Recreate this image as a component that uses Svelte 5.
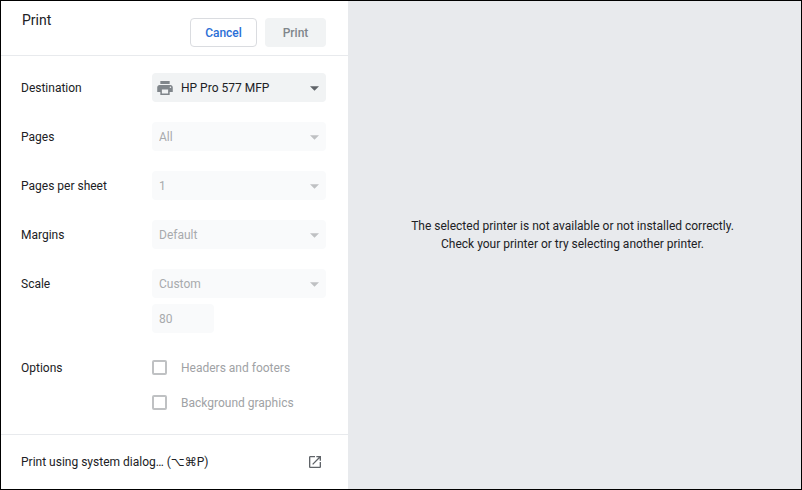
<script lang="ts">
  type Field = { id: string; label: string; value: string };

  const fields: Field[] = [
    { id: 'pages', label: 'Pages', value: 'All' },
    { id: 'per-sheet', label: 'Pages per sheet', value: '1' },
    { id: 'margins', label: 'Margins', value: 'Default' },
    { id: 'scale', label: 'Scale', value: 'Custom' },
  ];
  const options = ['Headers and footers', 'Background graphics'];
</script>

{#snippet arrow()}
  <svg class="arrow" viewBox="0 0 10 5" aria-hidden="true"><path d="M0 0h10L5 5z" /></svg>
{/snippet}

<main class="dialog">
  <section class="sidebar">
    <header class="header">
      <h1>Print</h1>
      <div class="actions">
        <button class="btn btn--cancel" type="button">Cancel</button>
        <button class="btn" type="button" disabled>Print</button>
      </div>
    </header>

    <form class="settings">
      <div class="row">
        <label for="destination">Destination</label>
        <div class="select">
          <svg class="printer" viewBox="2 3 20 18" aria-hidden="true">
            <path d="M19 8H5c-1.66 0-3 1.34-3 3v6h4v4h12v-4h4v-6c0-1.66-1.34-3-3-3zm-3 11H8v-5h8v5zm3-7c-.55 0-1-.45-1-1s.45-1 1-1 1 .45 1 1-.45 1-1 1zm-1-9H6v4h12V3z" />
          </svg>
          <select id="destination" class="with-icon">
            <option>HP Pro 577 MFP</option>
          </select>
          {@render arrow()}
        </div>
      </div>

      {#each fields as field}
        <div class="row">
          <label for={field.id}>{field.label}</label>
          <div class="controls">
            <div class="select">
              <select id={field.id} disabled>
                <option>{field.value}</option>
              </select>
              {@render arrow()}
            </div>
            {#if field.id === 'scale'}
              <input class="scale" type="text" value="80" aria-label="Scale percentage" disabled />
            {/if}
          </div>
        </div>
      {/each}

      <div class="row" role="group" aria-labelledby="options-label">
        <span id="options-label" class="label">Options</span>
        <div class="controls">
          {#each options as option}
            <label class="check">
              <input type="checkbox" disabled />
              {option}
            </label>
          {/each}
        </div>
      </div>
    </form>

    <a class="system" href="#system-dialog">
      <span>Print using system dialog… (⌥⌘P)</span>
      <svg viewBox="3 3 18 18" aria-hidden="true">
        <path d="M19 19H5V5h7V3H5c-1.11 0-2 .9-2 2v14c0 1.1.89 2 2 2h14c1.1 0 2-.9 2-2v-7h-2v7zM14 3v2h3.59l-9.83 9.83 1.41 1.41L19 6.41V10h2V3h-7z" />
      </svg>
    </a>
  </section>

  <section class="preview">
    <p>The selected printer is not available or not installed correctly. Check your printer or try selecting another printer.</p>
  </section>
</main>

<style>
  :global(body) { margin: 0; }
  .dialog, .dialog * { box-sizing: border-box; }
  .dialog { display: flex; min-height: 100vh; border: 1px solid #000; background: #fff; color: #202124; font: 12px/18px Roboto, "DejaVu Sans", sans-serif; }

  .sidebar { flex: 0 0 347px; display: flex; flex-direction: column; }
  .header { display: flex; justify-content: space-between; height: 55px; padding: 9px 22px 8px 21px; border-bottom: 1px solid #e8eaed; }
  h1 { margin: 0; font-size: 14px; line-height: 20px; font-weight: 400; }
  .actions { display: flex; align-items: flex-end; gap: 8px; }
  .btn { height: 29px; width: 61px; padding: 0; border: 0; border-radius: 4px; background: #f1f3f4; color: #80868b; font: inherit; font-weight: 500; }
  .btn--cancel { width: 67px; border: 1px solid #dadce0; background: #fff; color: #2b6fd6; }

  .settings { flex: 1; display: flex; flex-direction: column; gap: 20px; padding: 17px 22px 16px 20px; }
  .row { display: flex; align-items: flex-start; }
  .row > label, .label { flex: 0 0 131px; line-height: 30px; margin-bottom: -1px; }
  .controls { flex: 1; display: flex; flex-direction: column; gap: 6px; }

  .select { position: relative; flex: 1; display: flex; }
  select, .scale { height: 29px; padding: 0 7px; border: 0; border-radius: 4px; background: #f1f3f4; color: #202124; font: inherit; }
  select { width: 100%; appearance: none; }
  select:disabled, .scale:disabled { background: #f9fafb; color: #a8aaad; opacity: 1; }
  .with-icon { padding-left: 29px; }
  .scale { width: 62px; }
  .arrow { position: absolute; right: 7px; top: 13px; width: 9px; height: 5px; fill: #5f6368; pointer-events: none; }
  select:disabled + .arrow { fill: #bfc1c3; }
  .printer { position: absolute; left: 5px; top: 8px; width: 16px; height: 14px; fill: #80868b; pointer-events: none; }

  .check { display: flex; align-items: center; gap: 14px; height: 29px; color: #a0a2a5; }
  .check input { appearance: none; width: 15px; height: 15px; margin: 0; border: 2px solid #bfc1c3; border-radius: 2px; }

  .system { display: flex; align-items: center; justify-content: space-between; height: 55px; padding: 0 27px 0 20px; border-top: 1px solid #e8eaed; color: inherit; line-height: 20px; text-decoration: none; }
  .system svg { width: 12px; height: 12px; fill: #5f6368; }

  .preview { flex: 1; display: flex; align-items: center; justify-content: center; padding: 0 20px 20px 16px; background: #e8eaed; text-align: center; }
  .preview p { max-width: 340px; margin: 0; }
</style>
